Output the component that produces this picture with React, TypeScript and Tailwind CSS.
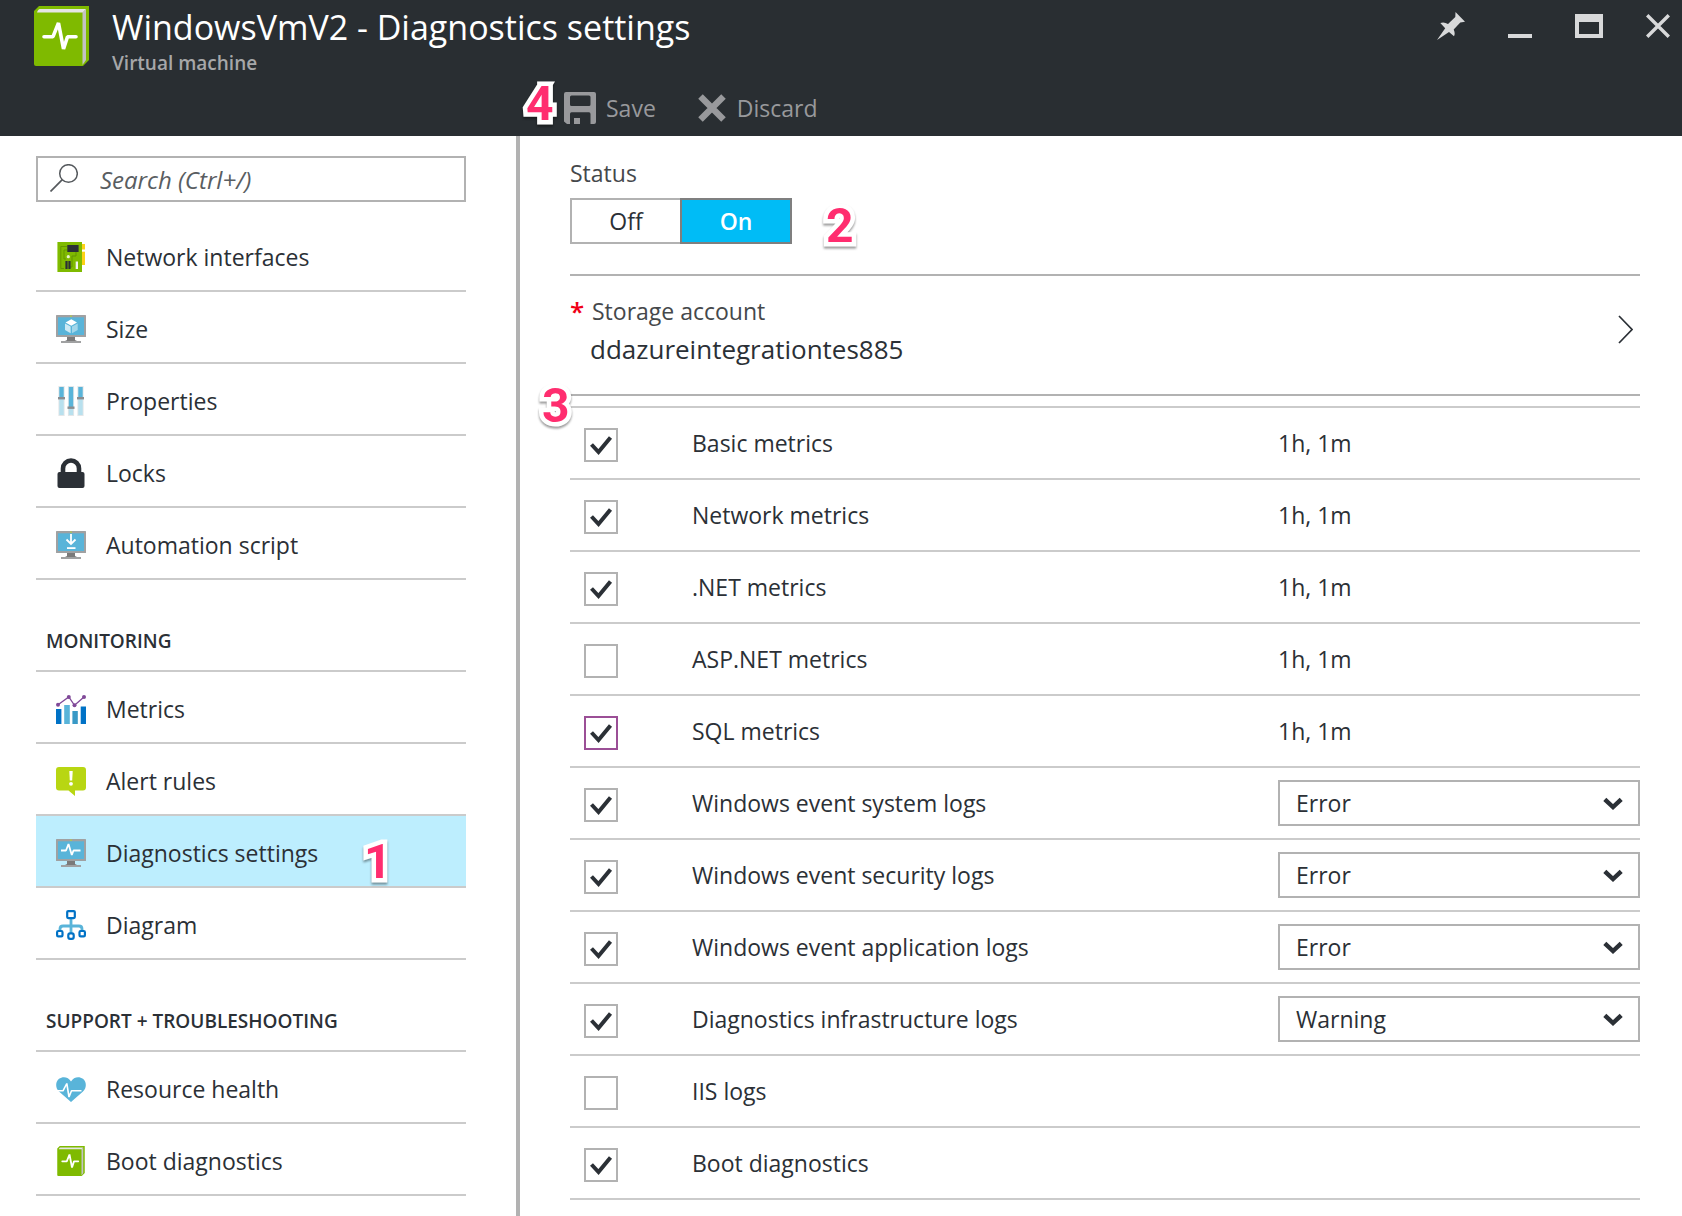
import { useState, type ReactNode } from "react";

/* ---------- icons ---------- */

function BookPulseIcon({ className }: { className: string }) {
  return (
    <svg viewBox="0 0 55 60" className={className} aria-hidden="true">
      <path d="M5 0H55V54L49 60H2Q0 60 0 58V5Z" fill="#7fba00" />
      <path d="M6 3H52L49 6.5H3Q4 3 6 3Z" fill="#e5e5e5" />
      <path d="M52 3V54L48.500 59V6.500Z" fill="#c3c3c3" />
      <path d="M10 30.700H19L24.500 17L29.500 43L33.500 30.700H42" fill="none" stroke="#fff" strokeWidth="3.600" strokeLinecap="round" strokeLinejoin="bevel" />
    </svg>
  );
}

function Monitor({ children }: { children: ReactNode }) {
  return (
    <svg viewBox="0 0 30 28" className="h-7 w-[30px]" aria-hidden="true">
      <rect width="30" height="22" rx="0.500" fill="#a0a1a2" />
      <rect x="2" y="2.300" width="26" height="17.700" fill="#59b4d9" />
      <rect x="14" y="0.600" width="2" height="1" fill="#b8d432" />
      <path d="M11 22H19V25L21 26H9L11 25Z" fill="#7a7a7a" />
      <rect x="5" y="26" width="20" height="2" fill="#a0a1a2" />
      {children}
    </svg>
  );
}

const SizeIcon = () => (
  <Monitor>
    <path d="M15.300 4.300L21 7.500L15.300 10.700L9.500 7.500Z" fill="#fff" />
    <path d="M9 8.500L14.600 11.600V18.200L9 15Z" fill="#cdeaf5" />
    <path d="M21.700 8.500L16 11.600V18.200L21.700 15Z" fill="#a2d6ea" />
  </Monitor>
);

const AutomationIcon = () => (
  <Monitor>
    <path d="M15 3V12.500M10.500 8.500L15 13L19.500 8.500" fill="none" stroke="#fff" strokeWidth="1.800" />
    <rect x="11" y="16.200" width="8.500" height="1.800" fill="#fff" />
  </Monitor>
);

const DiagnosticsIcon = () => (
  <Monitor>
    <path d="M5 11.500H10L12.500 5L15.800 16L17.500 11.500H24.500" fill="none" stroke="#fff" strokeWidth="1.800" strokeLinejoin="bevel" />
  </Monitor>
);

const NetworkIcon = () => (
  <svg viewBox="0 0 28 30" className="h-[30px] w-7" aria-hidden="true">
    <rect width="25" height="30" fill="#7fba00" />
    <rect width="1" height="30" fill="#b5dc66" />
    <rect x="25" y="2" width="3" height="5.500" fill="#fcd116" />
    <rect x="25" y="9.700" width="3" height="13.300" fill="#fcd116" />
    <path d="M10 4.500H3.800V26.500H7M10 8H7V17H9M19 10V14H15V25H13" fill="none" stroke="#659600" strokeWidth="1" />
    <rect x="10.300" y="3" width="11.300" height="7" fill="#2b3036" />
    <circle cx="11.300" cy="14.700" r="1.600" fill="#e8f3cf" />
    <path d="M9.500 19V27M12.500 19V27" stroke="#2b3036" strokeWidth="2.200" />
    <rect x="18.700" y="19.500" width="2.300" height="7.500" fill="#f2f2f2" />
  </svg>
);

const PropertiesIcon = () => (
  <svg viewBox="0 0 30 30" className="h-[30px] w-[30px]" aria-hidden="true">
    {[
      [3, 12],
      [12.5, 21.5],
      [22, 12],
    ].map(([x, y]) => (
      <g key={x}>
        <rect x={x - 0.6} y="0" width="6.200" height="30" fill="#e3e6e8" />
        <rect x={x + 0.3} y="1" width="4.400" height={y - 1} fill="#59b4d9" />
        <rect x={x + 0.3} y={y} width="4.400" height={29 - y} fill="#b8e0ee" />
        <rect x={x - 1} y={y - 1} width="7" height="2.400" fill="#8a8d90" />
      </g>
    ))}
  </svg>
);

const LockIcon = () => (
  <svg viewBox="0 0 28 30" className="h-[30px] w-7" aria-hidden="true">
    <path d="M6 16V10.500A8 8 0 0 1 22 10.500V16" fill="none" stroke="#2b3036" strokeWidth="4.600" />
    <rect x="0.500" y="14" width="27" height="16" rx="2" fill="#2b3036" />
  </svg>
);

const MetricsIcon = () => (
  <svg viewBox="0 0 30 29" className="h-[29px] w-[30px]" aria-hidden="true">
    <rect x="0" y="14" width="5.400" height="15" fill="#0072c6" />
    <rect x="8.200" y="10" width="5.600" height="19" fill="#59b4d9" />
    <rect x="16.400" y="16" width="5.400" height="13" fill="#3999c6" />
    <rect x="24.700" y="11.500" width="5.300" height="17.500" fill="#0072c6" />
    <path d="M2 9.800L12.800 2L18.500 10.300L28 2" fill="none" stroke="#804998" strokeWidth="1.300" />
    <g fill="#804998">
      <circle cx="2" cy="9.800" r="2" />
      <circle cx="12.800" cy="2" r="2" />
      <circle cx="18.500" cy="10.300" r="2" />
      <circle cx="28" cy="2" r="2" />
    </g>
  </svg>
);

const AlertIcon = () => (
  <svg viewBox="0 0 30 29" className="h-[29px] w-[30px]" aria-hidden="true">
    <path d="M3 0H27Q30 0 30 3V20.500Q30 23.500 27 23.500H19V29L12.500 23.500H3Q0 23.500 0 20.500V3Q0 0 3 0Z" fill="#b8d612" />
    <path d="M13.300 4H16.700L16.200 13.500H13.800Z" fill="#fff" />
    <circle cx="15" cy="16.800" r="1.900" fill="#fff" />
  </svg>
);

const DiagramIcon = () => (
  <svg viewBox="0 0 30 30" className="h-[30px] w-[30px]" aria-hidden="true">
    <path d="M15 8V24M4 21V19Q4 16 7 16H23Q26 16 26 19V21" fill="none" stroke="#59b4d9" strokeWidth="2.800" />
    <g fill="#fff" stroke="#0072c6" strokeWidth="2.200">
      <rect x="11.200" y="1.100" width="7.600" height="7" rx="1" />
      <rect x="1.100" y="21" width="5.400" height="5.400" rx="1.200" />
      <rect x="12.300" y="23.400" width="5.400" height="5.400" rx="1.800" />
      <rect x="23.500" y="21" width="5.400" height="5.400" rx="1.200" />
    </g>
  </svg>
);

const HeartIcon = () => (
  <svg viewBox="0 0 30 25" className="h-[25px] w-[30px]" aria-hidden="true">
    <path d="M15 25L3 14.500C-1 10.500 -0.500 4.500 3 1.800C7 -1.200 12.500 0 15 4.500C17.500 0 23 -1.200 27 1.800C30.500 4.500 31 10.500 27 14.500Z" fill="#59b4d9" />
    <path d="M1 13.800H7L10.800 6.500L13 20L15.500 13.800H25.500" fill="none" stroke="#fff" strokeWidth="1.600" strokeLinejoin="bevel" />
  </svg>
);

const PinIcon = () => (
  <svg viewBox="0 0 28 28" className="h-7 w-7" fill="#d8d9da" aria-hidden="true">
    <path d="M18.500 0L28 9.800L23.300 10.500L16.700 17.500Q18.500 21.500 17 24.300L12 20L0 28L8.200 16.200L3.300 11Q7 9.500 11 12L18.300 5Z" />
  </svg>
);

const SaveIcon = () => (
  <svg viewBox="0 0 32 32" className="size-8" aria-hidden="true">
    <path
      fillRule="evenodd"
      fill="#98999c"
      d="M2 0H30Q32 0 32 2V30Q32 32 30 32H26.500V22Q26.500 20.300 25 20.300H7.500Q6 20.300 6 22V32H3L0 29.500V2Q0 0 2 0ZM7.500 3.500Q6 3.500 6 5V12.500Q6 14 7.500 14H25Q26.500 14 26.500 12.500V5Q26.500 3.500 25 3.500ZM10 26H16V32H10Z"
    />
  </svg>
);

/* ---------- small pieces ---------- */

function StepBadge({ n, className }: { n: number; className: string }) {
  return (
    <span
      className={`pointer-events-none absolute z-10 font-['Roboto',sans-serif] text-[48px] leading-none font-bold text-[#ff2d6f] [-webkit-text-stroke:9px_white] [paint-order:stroke_fill] [stroke-linejoin:round] drop-shadow-[0_2px_1px_rgba(0,0,0,0.4)] ${className}`}
    >
      {n}
    </span>
  );
}

type NavEntry = { label: string; icon: ReactNode; active?: boolean; step?: number };

function NavList({ items }: { items: NavEntry[] }) {
  return (
    <ul>
      {items.map((item) => (
        <li key={item.label} className="relative">
          <a
            href="#"
            aria-current={item.active ? "page" : undefined}
            className={`flex h-[72px] items-center border-b-2 border-[#cbcbcb] pt-1 pl-5 ${item.active ? "bg-[#bdeefe]" : ""}`}
          >
            <span className="mr-5 flex w-[30px] shrink-0 justify-center">{item.icon}</span>
            {item.label}
          </a>
          {item.step && <StepBadge n={item.step} className="top-[22px] left-[328px]" />}
        </li>
      ))}
    </ul>
  );
}

function NavHeading({ children }: { children: ReactNode }) {
  return (
    <h2 className="flex h-[92px] items-center border-b-2 border-[#cbcbcb] pt-8 pl-[10px] text-[19px] font-semibold">
      {children}
    </h2>
  );
}

const general: NavEntry[] = [
  { label: "Network interfaces", icon: <NetworkIcon /> },
  { label: "Size", icon: <SizeIcon /> },
  { label: "Properties", icon: <PropertiesIcon /> },
  { label: "Locks", icon: <LockIcon /> },
  { label: "Automation script", icon: <AutomationIcon /> },
];

const monitoring: NavEntry[] = [
  { label: "Metrics", icon: <MetricsIcon /> },
  { label: "Alert rules", icon: <AlertIcon /> },
  { label: "Diagnostics settings", icon: <DiagnosticsIcon />, active: true, step: 1 },
  { label: "Diagram", icon: <DiagramIcon /> },
];

const support: NavEntry[] = [
  { label: "Resource health", icon: <HeartIcon /> },
  { label: "Boot diagnostics", icon: <BookPulseIcon className="h-[30px] w-7" /> },
];

type Setting = { name: string; on: boolean; interval?: string; level?: string; focused?: boolean };

const settings: Setting[] = [
  { name: "Basic metrics", on: true, interval: "1h, 1m" },
  { name: "Network metrics", on: true, interval: "1h, 1m" },
  { name: ".NET metrics", on: true, interval: "1h, 1m" },
  { name: "ASP.NET metrics", on: false, interval: "1h, 1m" },
  { name: "SQL metrics", on: true, interval: "1h, 1m", focused: true },
  { name: "Windows event system logs", on: true, level: "Error" },
  { name: "Windows event security logs", on: true, level: "Error" },
  { name: "Windows event application logs", on: true, level: "Error" },
  { name: "Diagnostics infrastructure logs", on: true, level: "Warning" },
  { name: "IIS logs", on: false },
  { name: "Boot diagnostics", on: true },
];

function SettingRow({ setting, id }: { setting: Setting; id: string }) {
  return (
    <tr className="h-[72px] border-b-2 border-[#cbcbcb]">
      <td className="w-[122px] p-0 pt-1 pl-[14px]">
        <span className="relative block size-[34px]">
          <input
            id={id}
            type="checkbox"
            defaultChecked={setting.on}
            className={`peer block size-[34px] appearance-none border-2 bg-white ${setting.focused ? "border-[#9b4f96]" : "border-[#b2b2b2]"}`}
          />
          <svg viewBox="0 0 34 34" className="pointer-events-none absolute inset-0 hidden size-[34px] peer-checked:block" aria-hidden="true">
            <path d="M7.500 16.500L14.500 24L26.500 9.500" fill="none" stroke="#2b3036" strokeWidth="4" />
          </svg>
        </span>
      </td>
      <td className="p-0">
        <label htmlFor={id}>{setting.name}</label>
      </td>
      <td className="w-[362px] p-0">
        {setting.interval}
        {setting.level && (
          <span className="relative block">
            <select
              aria-label={`${setting.name} level`}
              defaultValue={setting.level}
              className="block h-[46px] w-full appearance-none border-2 border-[#b2b2b2] bg-white pr-12 pl-4"
            >
              <option>Error</option>
              <option>Warning</option>
            </select>
            <svg viewBox="0 0 20 14" className="pointer-events-none absolute top-[17px] right-[17px] h-[14px] w-5" aria-hidden="true">
              <path d="M1.800 2.300L10 10L18.200 2.300" fill="none" stroke="#2b3036" strokeWidth="4.400" />
            </svg>
          </span>
        )}
      </td>
    </tr>
  );
}

export default function App() {
  const [enabled, setEnabled] = useState(true);
  return (
    <div className="flex min-h-screen flex-col bg-white font-['Open_Sans','Noto_Sans',sans-serif] text-[23px] leading-8 text-[#2b3036]">
      <header className="bg-[#292e32] text-[#98999c]">
        <div className="flex items-start justify-between pr-3 pl-[34px]">
          <div className="flex items-start">
            <BookPulseIcon className="mt-[6px] mr-[23px] h-[60px] w-[55px] shrink-0" />
            <div className="pt-1">
              <h1 className="text-[34px] leading-[46px] text-white">WindowsVmV2 - Diagnostics settings</h1>
              <p className="text-[19px] leading-[26px] font-semibold text-[#a6a7a9]">Virtual machine</p>
            </div>
          </div>
          <div className="flex gap-[43px] pt-3">
            <button type="button" aria-label="Pin"><PinIcon /></button>
            <button type="button" aria-label="Minimize">
              <svg viewBox="0 0 24 28" className="h-7 w-6" aria-hidden="true"><rect y="22" width="24" height="4" fill="#d8d9da" /></svg>
            </button>
            <button type="button" aria-label="Maximize">
              <svg viewBox="0 0 28 28" className="size-7" aria-hidden="true"><path fillRule="evenodd" d="M0 2H28V26H0ZM4 10V22H24V10Z" fill="#d8d9da" /></svg>
            </button>
            <button type="button" aria-label="Close">
              <svg viewBox="0 0 24 28" className="h-7 w-6" aria-hidden="true"><path d="M1.200 3.200L22.800 24.800M22.800 3.200L1.200 24.800" stroke="#d8d9da" strokeWidth="3.400" /></svg>
            </button>
          </div>
        </div>
        <div className="relative flex h-[60px] items-center gap-[42px] pt-1 pl-[564px]">
          <StepBadge n={4} className="top-1 left-[526px]" />
          <button type="button" className="flex items-center gap-[10px]">
            <SaveIcon />
            Save
          </button>
          <button type="button" className="flex items-center gap-[11px]">
            <svg viewBox="0 0 28 28" className="size-7" aria-hidden="true"><path d="M2.500 2.500L25.500 25.500M25.500 2.500L2.500 25.500" stroke="#98999c" strokeWidth="6.400" /></svg>
            Discard
          </button>
        </div>
      </header>

      <div className="flex flex-1">
        <aside className="w-[520px] shrink-0 border-r-4 border-[#b2b2b2] pt-5 pr-[50px] pl-9">
          <div className="relative mb-[18px]">
            <svg viewBox="0 0 28 28" className="pointer-events-none absolute top-2 left-[14px] size-7" aria-hidden="true">
              <circle cx="18.500" cy="9.500" r="8.800" fill="none" stroke="#55595d" strokeWidth="1.500" />
              <path d="M12.300 15.700L0.500 27.500" stroke="#55595d" strokeWidth="1.700" />
            </svg>
            <input
              type="search"
              aria-label="Search"
              placeholder="Search (Ctrl+/)"
              className="block h-[46px] w-full border-2 border-[#b2b2b2] bg-white pl-[62px] text-[24px] italic placeholder:text-[#595d61]"
            />
          </div>
          <nav>
            <NavList items={general} />
            <NavHeading>MONITORING</NavHeading>
            <NavList items={monitoring} />
            <NavHeading>SUPPORT + TROUBLESHOOTING</NavHeading>
            <NavList items={support} />
          </nav>
        </aside>

        <main className="flex-1 pt-5 pr-[42px] pl-[50px]">
          <section className="border-b-2 border-[#b2b2b2] pb-[30px]">
            <h2 id="status-label" className="mb-2 leading-[34px] text-[#45484b]">Status</h2>
            <div role="group" aria-labelledby="status-label" className="relative flex h-[46px] w-[222px]">
              <button
                type="button"
                aria-pressed={!enabled}
                onClick={() => setEnabled(false)}
                className={`flex-1 border-2 ${enabled ? "border-r-0 border-[#b2b2b2]" : "border-[#7f7f7f] bg-[#00bcf6] font-semibold text-white"}`}
              >
                Off
              </button>
              <button
                type="button"
                aria-pressed={enabled}
                onClick={() => setEnabled(true)}
                className={`flex-1 border-2 ${enabled ? "border-[#7f7f7f] bg-[#00bcf6] font-semibold text-white" : "border-l-0 border-[#b2b2b2]"}`}
              >
                On
              </button>
              <StepBadge n={2} className="top-1 left-[256px]" />
            </div>
          </section>

          <button type="button" className="flex w-full items-start justify-between border-b-2 border-[#b2b2b2] pt-[19px] pr-[7px] pb-[23px] text-left">
            <span className="block">
              <span className="flex text-[#45484b]">
                <span className="w-[22px] text-[26px] font-semibold text-[#f00016]">*</span>
                Storage account
              </span>
              <span className="block pl-5 text-[26px] leading-[44px]">ddazureintegrationtes885</span>
            </span>
            <svg viewBox="0 0 15 30" className="mt-5 h-[30px] w-[15px]" aria-hidden="true">
              <path d="M1 1L14 14.500L1 28" fill="none" stroke="#2b3036" strokeWidth="1.700" />
            </svg>
          </button>

          <div className="relative mt-[10px]">
            <StepBadge n={3} className="-top-6 -left-7" />
            <table className="w-full table-fixed border-collapse border-t-2 border-[#cbcbcb]">
              <tbody>
                {settings.map((s, i) => (
                  <SettingRow key={s.name} setting={s} id={`setting-${i}`} />
                ))}
              </tbody>
            </table>
          </div>
        </main>
      </div>
    </div>
  );
}
